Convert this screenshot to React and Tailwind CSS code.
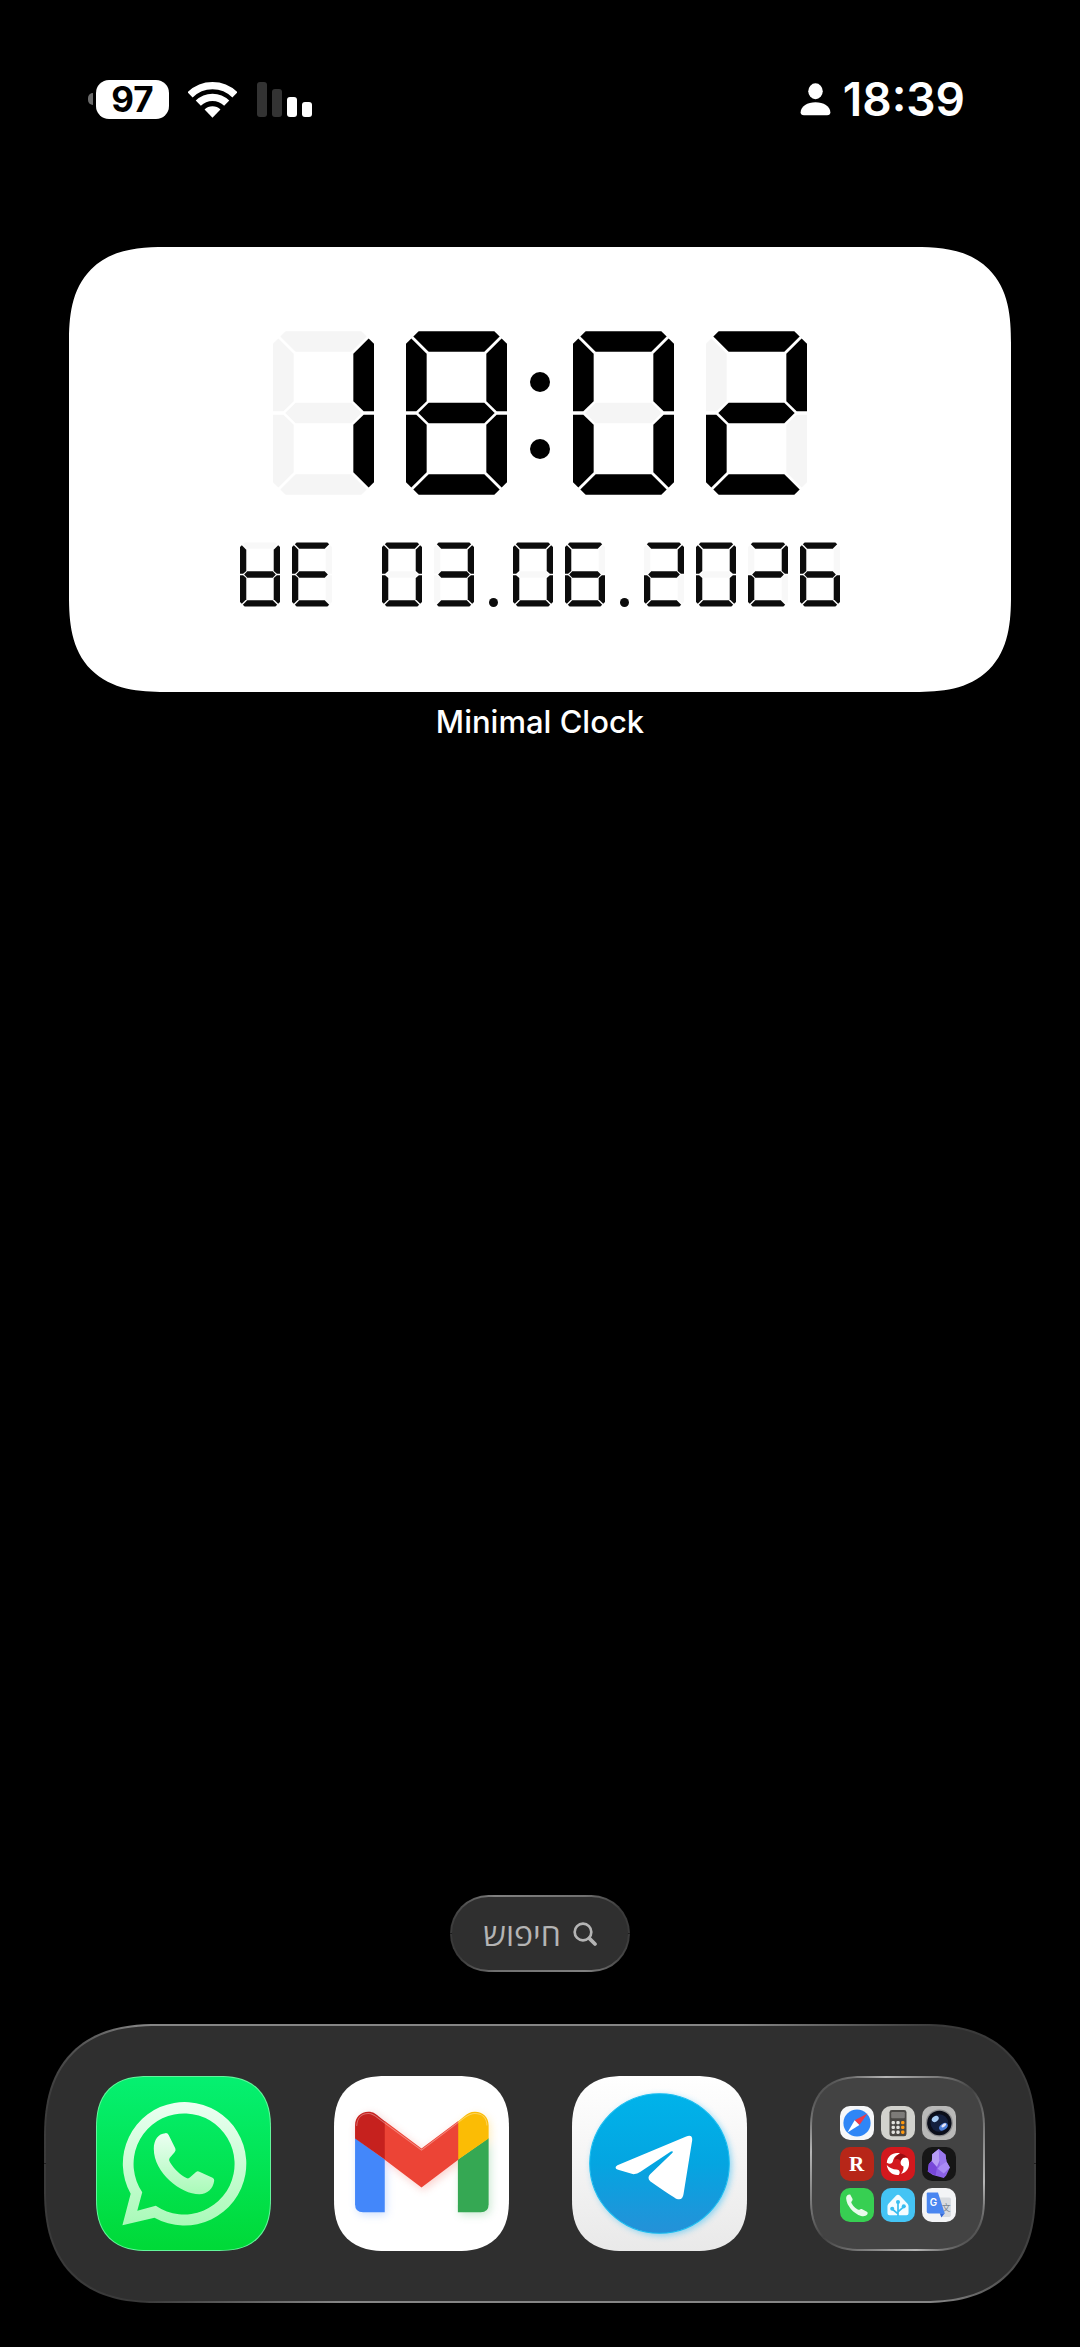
const SEGMENTS = {
  0: 'abcdef',
  1: 'bc',
  2: 'abdeg',
  3: 'abcdg',
  6: 'acdefg',
  8: 'abcdefg',
  E: 'adefg',
  W: 'bcdefg',
}

const SIZES = {
  lg: { w: 303, h: 491, t: 62, k: 38, gap: 6, className: 'w-[101px] h-[164px]', on: '#000000', off: '#f5f5f5' },
  sm: { w: 121, h: 194, t: 19, k: 14, gap: 3, className: 'w-10 h-[65px]', on: '#0c0c0c', off: '#f8f8f8' },
}

function segmentPoints({ w, h, t, k, gap }) {
  const m = h / 2
  const near = (k - gap) / 2
  const far = (k + gap) / 2
  const a = [[far, near], [k, 0], [w - k, 0], [w - far, near], [w - t - gap, t], [t + gap, t]]
  const f = [[0, k], [near, far], [t, t + gap], [t, m - t / 2 - gap + 2], [t / 2, m - gap + 1], [0, m - gap + 1]]
  const g = [[t / 2 + gap, m], [t + gap, m - t / 2], [w - t - gap, m - t / 2], [w - t / 2 - gap, m], [w - t - gap, m + t / 2], [t + gap, m + t / 2]]
  const flipX = (pts) => pts.map(([x, y]) => [w - x, y])
  const flipY = (pts) => pts.map(([x, y]) => [x, h - y])
  return { a, b: flipX(f), c: flipX(flipY(f)), d: flipY(a), e: flipY(f), f, g }
}

function Digit({ char, size }) {
  const s = SIZES[size]
  const shapes = segmentPoints(s)
  return (
    <svg viewBox={`0 0 ${s.w} ${s.h}`} className={`${s.className} shrink-0`} aria-hidden="true">
      {Object.entries(shapes).map(([name, pts]) => (
        <polygon key={name} points={pts.join(' ')} fill={SEGMENTS[char].includes(name) ? s.on : s.off} />
      ))}
    </svg>
  )
}

function ClockWidget() {
  return (
    <section className="flex flex-col items-center">
      <div className="w-full bg-white rounded-[96px] [corner-shape:superellipse(1.4)] pt-[84px] pb-[85px] flex flex-col items-center gap-[47px]">
        <time dateTime="18:02" aria-label="18:02" className="flex items-center gap-8">
          <Digit char="1" size="lg" />
          <Digit char="8" size="lg" />
          <span className="flex flex-col gap-[47px] w-5 pt-1 mx-[-9px] shrink-0">
            <span className="size-5 rounded-full bg-black" />
            <span className="size-5 rounded-full bg-black" />
          </span>
          <Digit char="0" size="lg" />
          <Digit char="2" size="lg" />
        </time>
        <time dateTime="2026-06-03" aria-label="WE 03.06.2026" className="flex items-end gap-3">
          {[...'WE 03.06.2026'].map((char, i) => {
            if (char === ' ') return <span key={i} className="w-[26px]" />
            if (char === '.') {
              return (
                <span key={i} className="w-[15px] flex justify-center">
                  <span className="size-[9px] rounded-full bg-[#0c0c0c]" />
                </span>
              )
            }
            return <Digit key={i} char={char} size="sm" />
          })}
        </time>
      </div>
      <h1 className="mt-[10px] text-[31px] leading-10 font-medium text-white">Minimal Clock</h1>
    </section>
  )
}

function StatusBar() {
  return (
    <header className="flex items-center justify-between pl-[88px] pr-[115px] pt-[72px]">
      <div className="flex items-center">
        <span className="w-[5px] h-3 rounded-l-full bg-[#6b6b6b] mr-[3px]" />
        <span className="w-[73px] h-[39px] rounded-[13px] bg-white text-black text-[35px] leading-[39px] font-bold text-center">
          97
        </span>
        <svg viewBox="0 0 148 112" className="w-[49px] h-[37px] ml-[19px]" fill="none" stroke="#fff" strokeWidth="22" aria-label="Wi-Fi">
          <path d="M6 42A96 96 0 0 1 142 42" />
          <path d="M31 67A61 61 0 0 1 117 67" />
          <path d="M50 86A34 34 0 0 1 98 86L74 111Z" fill="#fff" stroke="none" />
        </svg>
        <div className="flex items-end gap-[5px] ml-5 h-[35px]">
          <span className="w-[10px] h-[35px] rounded-[3px] bg-[#333]" />
          <span className="w-[10px] h-7 rounded-[3px] bg-[#333]" />
          <span className="w-[10px] h-5 rounded-[3px] bg-white" />
          <span className="w-[10px] h-[15px] rounded-[3px] bg-white" />
        </div>
      </div>
      <div className="flex items-center gap-3">
        <svg viewBox="0 0 92 100" className="w-[31px] h-[33px]" fill="#fff" aria-label="Focus">
          <ellipse cx="46" cy="25" rx="22" ry="24" />
          <path d="M1 89C1 70 22 58 46 58s45 12 45 31c0 6-3 9-10 9H11C4 98 1 95 1 89Z" />
        </svg>
        <time className="text-[46px] leading-[54px] font-semibold text-white">18:39</time>
      </div>
    </header>
  )
}

function WhatsAppIcon() {
  return (
    <svg viewBox="0 0 524 524" className="size-full rounded-[51px] [corner-shape:superellipse(1.3)]">
      <defs>
        <linearGradient id="waBg" x1="0" y1="0" x2="0" y2="1">
          <stop offset="0" stopColor="#05f071" />
          <stop offset="1" stopColor="#00d937" />
        </linearGradient>
        <linearGradient id="waFg" x1="0" y1="0" x2="0" y2="1">
          <stop offset="0" stopColor="#ecfff2" />
          <stop offset="1" stopColor="#a9fab8" />
        </linearGradient>
      </defs>
      <rect width="524" height="524" fill="url(#waBg)" />
      <path
        fill="url(#waFg)"
        fillRule="evenodd"
        d="M102 354A187 187 0 1 1 174 426L77 449ZM137 349L122 405L178 390A153 153 0 1 0 137 349Z"
      />
      <path
        fill="url(#waFg)"
        d="M172 217C172 190 186 171 207 170Q214 169 217 176L237 216Q240 222 235 228L220 245Q216 250 221 258C234 279 252 296 271 306Q277 309 282 304L300 288Q305 284 310 287L350 305Q356 308 355 314C352 338 334 355 310 355C254 355 172 290 172 217Z"
      />
    </svg>
  )
}

function GmailIcon() {
  return (
    <svg viewBox="0 0 524 524" className="size-full">
      <defs>
        <filter id="gmGlow" x="-20%" y="-20%" width="140%" height="140%">
          <feGaussianBlur stdDeviation="12" />
        </filter>
        <g id="gmMark">
          <path fill="#4387fa" d="M63 186L152 250V408H87Q63 408 63 384Z" />
          <path fill="#35a853" d="M463 186L371 250V408H439Q463 408 463 384Z" />
          <path fill="#c6211e" d="M63 148C63 123 80 107 103 107C118 107 126 114 134 121L153 136V251L63 187Z" />
          <path fill="#fbbc05" d="M463 148C463 123 446 107 422 107C408 107 400 112 392 119L371 136V251L463 187Z" />
          <path fill="#ec4436" d="M152 135L262 217L372 135V251L262 334L152 251Z" />
        </g>
      </defs>
      <rect width="524" height="524" fill="#fff" />
      <use href="#gmMark" x="6" y="8" opacity="0.25" filter="url(#gmGlow)" />
      <use href="#gmMark" />
      <path d="M68 150C69 124 84 112 103 112C116 112 124 119 132 126L262 222L392 124C400 118 410 112 422 112C444 112 457 126 458 148" fill="none" stroke="#fff" strokeOpacity="0.35" strokeWidth="3" />
    </svg>
  )
}

function TelegramIcon() {
  return (
    <svg viewBox="0 0 524 524" className="size-full">
      <defs>
        <linearGradient id="tgBg" x1="0" y1="0" x2="0" y2="1">
          <stop offset="0" stopColor="#ffffff" />
          <stop offset="1" stopColor="#e9e9e9" />
        </linearGradient>
        <linearGradient id="tgDisc" x1="0" y1="0" x2="0" y2="1">
          <stop offset="0" stopColor="#00b3ea" />
          <stop offset="0.5" stopColor="#04a5e1" />
          <stop offset="1" stopColor="#2591d8" />
        </linearGradient>
        <filter id="tgGlow" x="-20%" y="-20%" width="140%" height="140%">
          <feGaussianBlur stdDeviation="9" />
        </filter>
      </defs>
      <rect width="524" height="524" fill="url(#tgBg)" />
      <circle cx="268" cy="268" r="210" fill="#3fc0f5" opacity="0.6" filter="url(#tgGlow)" />
      <circle cx="262" cy="262" r="209" fill="url(#tgDisc)" stroke="#17bdf0" strokeWidth="3" />
      <path
        fill="#fff"
        d="M136 267L342 181Q361 174 360 192L334 353Q331 374 314 368Q304 364 234 315Q224 305 234 294L301 230Q305 224 296 226L205 287Q196 294 184 294L138 281Q124 275 136 267Z"
      />
    </svg>
  )
}

const miniApps = [
  {
    name: 'Safari',
    art: (
      <>
        <rect width="100" height="100" fill="#f6f7f9" />
        <circle cx="50" cy="50" r="40" fill="#2f86f6" />
        <path d="M81 22L57 56L43 42Z" fill="#f03a48" />
        <path d="M22 78L43 42L57 56Z" fill="#fff" />
      </>
    ),
  },
  {
    name: 'Calculator',
    art: (
      <>
        <rect width="100" height="100" fill="#d2d2cd" />
        <rect x="25" y="12" width="50" height="77" rx="7" fill="#4a4845" />
        <rect x="30" y="18" width="40" height="18" rx="3" fill="#7d7b78" />
        {[44, 58, 72].map((y) => (
          <g key={y}>
            <rect x="31" y={y} width="10" height="10" rx="4" fill="#e2e2de" />
            <rect x="45" y={y} width="10" height="10" rx="4" fill="#e2e2de" />
            <rect x="59" y={y} width="10" height="10" rx="4" fill="#ff9a10" />
          </g>
        ))}
      </>
    ),
  },
  {
    name: 'Camera',
    art: (
      <>
        <rect width="100" height="100" fill="#b9b9b8" />
        <circle cx="51" cy="50" r="40" fill="#8d8d8e" />
        <circle cx="51" cy="50" r="36" fill="#0b0e1a" />
        <circle cx="51" cy="50" r="26" fill="#14203f" />
        <ellipse cx="39" cy="38" rx="11" ry="8" transform="rotate(-35 39 38)" fill="#a9ccf3" />
        <ellipse cx="63" cy="61" rx="14" ry="9" transform="rotate(-35 63 61)" fill="#4f80d8" />
        <ellipse cx="64" cy="57" rx="8" ry="4" transform="rotate(-35 64 57)" fill="#e8e4f6" />
      </>
    ),
  },
  {
    name: 'Reader',
    art: (
      <>
        <rect width="100" height="100" fill="#b72618" />
        <text x="49" y="70" textAnchor="middle" fontSize="62" fontWeight="700" fill="#fff" className="font-['Liberation_Serif',serif]">
          R
        </text>
      </>
    ),
  },
  {
    name: 'Swirl',
    art: (
      <>
        <rect width="100" height="100" fill="#d3181d" />
        <path d="M56 19C38 14 19 25 17 46C28 54 35 46 36 38C39 29 46 23 56 19Z" fill="#fff" />
        <path d="M17 53C20 73 34 84 52 82C58 76 55 66 46 66C35 66 25 62 17 53Z" fill="#fff" />
        <path d="M58 79C76 75 87 58 81 38C77 28 66 30 60 38C55 47 58 54 66 57C67 66 64 73 58 79Z" fill="#fff" />
        <path d="M56 19C66 20 74 25 78 31C66 28 60 34 57 41C53 35 46 34 40 37C42 29 48 23 56 19Z" fill="#9c0d12" />
      </>
    ),
  },
  {
    name: 'Obsidian',
    art: (
      <>
        <rect width="100" height="100" fill="#161616" />
        <path d="M49 6L30 21L29 40L20 50L17 72L32 82L64 91L71 84L82 60L72 43L69 22Z" fill="#8b61e6" />
        <path d="M49 6L30 21L29 44L44 58L52 40Z" fill="#b79df5" />
        <path d="M49 6L69 22L72 43L52 56L52 40Z" fill="#9a78ee" />
        <path d="M20 50L29 42L44 60L40 84L17 72Z" fill="#7747d8" />
        <path d="M52 56L72 43L82 60L64 78L46 64Z" fill="#a98bf5" />
      </>
    ),
  },
  {
    name: 'Phone',
    art: (
      <>
        <rect width="100" height="100" fill="#37cf52" />
        <path
          d="M18 30C18 23 23 18 30 19L37 32C38 36 34 38 33 42C36 51 46 61 54 64C58 65 60 61 64 62L79 70C82 72 82 75 80 78C76 83 69 84 62 82C41 76 19 52 18 30Z"
          fill="#e9fbec"
        />
      </>
    ),
  },
  {
    name: 'Home',
    art: (
      <>
        <rect width="100" height="100" fill="#44c4f4" />
        <path d="M50 20Q53 20 56 23L78 46Q81 49 81 54V74Q81 80 75 80H25Q19 80 19 74V54Q19 49 22 46L44 23Q47 20 50 20Z" fill="#f4fcff" />
        <path d="M50 82V42M50 76L32 61M50 70L68 54" stroke="#38bdf0" strokeWidth="5" fill="none" />
        <circle cx="50" cy="41" r="6" fill="#38bdf0" />
        <circle cx="33" cy="61" r="6" fill="#38bdf0" />
        <circle cx="67" cy="54" r="6" fill="#38bdf0" />
      </>
    ),
  },
  {
    name: 'Translate',
    art: (
      <>
        <rect width="100" height="100" fill="#f3f4f6" />
        <path d="M42 28H80Q85 28 85 33V80Q85 85 80 85H58Z" fill="#d8dbdf" />
        <text x="71" y="69" textAnchor="middle" fontSize="26" fill="#7b858f" className="font-['Noto_Sans_CJK_SC',sans-serif]">
          文
        </text>
        <path d="M52 74H67L57 87Z" fill="#3367d6" />
        <path d="M17 13H47L67 75H20Q14 75 14 69V16Q14 13 17 13Z" fill="#4a86f0" />
        <text x="34" y="53" textAnchor="middle" fontSize="29" fontWeight="600" fill="#fff">
          G
        </text>
      </>
    ),
  },
]

const tile = 'block size-[175px] shrink-0 overflow-hidden rounded-[52px] [corner-shape:superellipse(1.3)]'

function Dock() {
  return (
    <nav className="p-[2px] rounded-[114px] [corner-shape:superellipse(1.3)] [background:linear-gradient(to_right,#3a3a3a,#858585_10%,#858585_70%,#3a3a3a_90%)_top/100%_50%_no-repeat,linear-gradient(to_left,#3a3a3a,#858585_10%,#858585_70%,#3a3a3a_90%)_bottom/100%_50%_no-repeat]">
      <div className="bg-[#2f2f2f] rounded-[112px] [corner-shape:superellipse(1.3)] pl-[50px] pr-[49px] py-[50px] flex items-center justify-between">
        <button aria-label="WhatsApp" className={`${tile} p-px bg-[#62f59b]`}>
          <WhatsAppIcon />
        </button>
        <button aria-label="Gmail" className={tile}>
          <GmailIcon />
        </button>
        <button aria-label="Telegram" className={tile}>
          <TelegramIcon />
        </button>
        <button aria-label="Folder" className={`${tile} p-[2px] bg-[linear-gradient(135deg,#555_8%,#b5b5b5_22%,#434343_50%,#b5b5b5_80%,#555_92%)]`}>
          <span className="size-full bg-[#434343] rounded-[50px] [corner-shape:superellipse(1.3)] grid grid-cols-[repeat(3,34px)] gap-[7px] place-content-center">
            {miniApps.map((app) => (
              <svg key={app.name} viewBox="0 0 100 100" className="size-[34px] rounded-[10px]" aria-label={app.name}>
                {app.art}
              </svg>
            ))}
          </span>
        </button>
      </div>
    </nav>
  )
}

export default function App() {
  return (
    <div className="min-h-screen bg-black flex flex-col font-['Inter','Liberation_Sans',sans-serif]">
      <StatusBar />
      <main className="flex-1 px-[69px] pt-[121px]">
        <ClockWidget />
      </main>
      <footer className="px-11 pb-11 flex flex-col gap-[52px]">
        <div className="self-center p-[2px] rounded-full [background:linear-gradient(to_right,#3a3a3a,#808080_25%,#707070_75%,#3a3a3a_95%)_top/100%_50%_no-repeat,linear-gradient(to_left,#3a3a3a,#808080_25%,#707070_75%,#3a3a3a_95%)_bottom/100%_50%_no-repeat]">
          <button
            dir="rtl"
            className="h-[73px] w-44 rounded-full bg-[#2f2f2f] text-[#b4b4b4] flex items-center justify-center gap-3 text-[32px] leading-10 font-medium font-['Open_Sans','Liberation_Sans',sans-serif]"
          >
            <svg viewBox="0 0 72 72" className="size-6" fill="none" stroke="currentColor" aria-hidden="true">
              <circle cx="30" cy="30" r="25" strokeWidth="8" />
              <path d="M49 49L66 66" strokeWidth="11" strokeLinecap="round" />
            </svg>
            <span>חיפוש</span>
          </button>
        </div>
        <Dock />
      </footer>
    </div>
  )
}
